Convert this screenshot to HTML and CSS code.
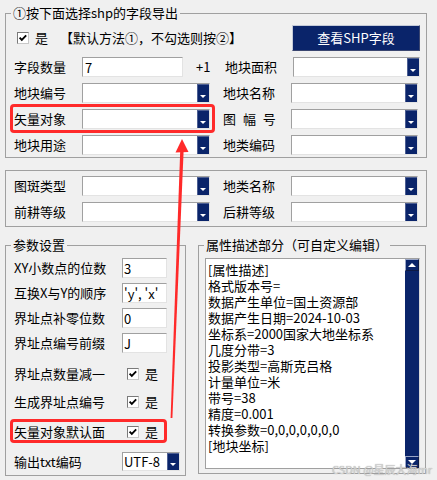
FILE: index.html
```html
<!DOCTYPE html>
<html lang="zh-CN">
<head>
    <meta charset="UTF-8">
    <meta name="viewport" content="width=device-width, initial-scale=1.0">
    <title>SHP字段导出</title>
    <link rel="stylesheet" href="styles.css">
</head>
<body>
    <fieldset class="group group-fields">
        <legend>①按下面选择shp的字段导出</legend>
        <div class="group-body">
            <div class="row row-top">
                <span class="check check-first"><svg viewBox="0 0 10 10"><polyline points="1.6,4.6 3.8,6.8 8.2,2.4"/></svg></span>
                <span class="check-text">是</span>
                <span class="note">【默认方法①，不勾选则按②】</span>
                <button class="btn-view">查看SHP字段</button>
            </div>
            <div class="row">
                <div class="cell">
                    <span class="lbl">字段数量</span>
                    <input class="edit edit-count" type="text" value="7">
                    <span class="plus">+1</span>
                </div>
                <div class="cell cell-right cell-shift">
                    <span class="lbl">地块面积</span>
                    <div class="combo combo-wide"><span class="combo-text"></span><span class="dd"></span></div>
                </div>
            </div>
            <div class="row">
                <div class="cell">
                    <span class="lbl">地块编号</span>
                    <div class="combo"><span class="combo-text"></span><span class="dd"></span></div>
                </div>
                <div class="cell cell-right">
                    <span class="lbl">地块名称</span>
                    <div class="combo"><span class="combo-text"></span><span class="dd"></span></div>
                </div>
            </div>
            <div class="row">
                <div class="cell mark mark-wide">
                    <span class="lbl">矢量对象</span>
                    <div class="combo"><span class="combo-text"></span><span class="dd"></span></div>
                </div>
                <div class="cell cell-right">
                    <span class="lbl lbl-spaced">图 幅 号</span>
                    <div class="combo"><span class="combo-text"></span><span class="dd"></span></div>
                </div>
            </div>
            <div class="row">
                <div class="cell">
                    <span class="lbl">地块用途</span>
                    <div class="combo"><span class="combo-text"></span><span class="dd"></span></div>
                </div>
                <div class="cell cell-right">
                    <span class="lbl">地类编码</span>
                    <div class="combo"><span class="combo-text"></span><span class="dd"></span></div>
                </div>
            </div>
        </div>
    </fieldset>

    <fieldset class="group group-extra">
        <div class="group-body">
            <div class="row">
                <div class="cell">
                    <span class="lbl">图斑类型</span>
                    <div class="combo"><span class="combo-text"></span><span class="dd"></span></div>
                </div>
                <div class="cell cell-right">
                    <span class="lbl">地类名称</span>
                    <div class="combo"><span class="combo-text"></span><span class="dd"></span></div>
                </div>
            </div>
            <div class="row">
                <div class="cell">
                    <span class="lbl">前耕等级</span>
                    <div class="combo"><span class="combo-text"></span><span class="dd"></span></div>
                </div>
                <div class="cell cell-right">
                    <span class="lbl">后耕等级</span>
                    <div class="combo"><span class="combo-text"></span><span class="dd"></span></div>
                </div>
            </div>
        </div>
    </fieldset>

    <div class="bottom">
        <fieldset class="group group-params">
            <legend>参数设置</legend>
            <div class="group-body">
                <div class="param-row">
                    <span class="param-lbl">XY小数点的位数</span>
                    <input class="edit edit-short" type="text" value="3">
                </div>
                <div class="param-row">
                    <span class="param-lbl">互换X与Y的顺序</span>
                    <input class="edit edit-short" type="text" value="'y', 'x'">
                </div>
                <div class="param-row">
                    <span class="param-lbl">界址点补零位数</span>
                    <input class="edit edit-short" type="text" value="0">
                </div>
                <div class="param-row">
                    <span class="param-lbl">界址点编号前缀</span>
                    <input class="edit edit-short" type="text" value="J">
                </div>
                <div class="param-row check-row-1">
                    <span class="param-lbl">界址点数量减一</span>
                    <span class="check param-check"><svg viewBox="0 0 10 10"><polyline points="1.6,4.6 3.8,6.8 8.2,2.4"/></svg></span>
                    <span class="check-text">是</span>
                </div>
                <div class="param-row check-row-2">
                    <span class="param-lbl">生成界址点编号</span>
                    <span class="check param-check"><svg viewBox="0 0 10 10"><polyline points="1.6,4.6 3.8,6.8 8.2,2.4"/></svg></span>
                    <span class="check-text">是</span>
                </div>
                <div class="param-row check-row-3">
                    <div class="mark mark-param">
                        <span class="param-lbl">矢量对象默认面</span>
                        <span class="check param-check"><svg viewBox="0 0 10 10"><polyline points="1.6,4.6 3.8,6.8 8.2,2.4"/></svg></span>
                        <span class="check-text">是</span>
                    </div>
                </div>
                <div class="param-row encode-row">
                    <span class="param-lbl">输出txt编码</span>
                    <div class="combo combo-small"><span class="combo-text">UTF-8</span><span class="dd"></span></div>
                </div>
            </div>
        </fieldset>

        <fieldset class="group group-desc">
            <legend>属性描述部分（可自定义编辑）</legend>
            <div class="group-body">
                <div class="memo">
                    <div class="memo-text">[属性描述]
格式版本号=
数据产生单位=国土资源部
数据产生日期=2024-10-03
坐标系=2000国家大地坐标系
几度分带=3
投影类型=高斯克吕格
计量单位=米
带号=38
精度=0.001
转换参数=0,0,0,0,0,0,0
[地块坐标]</div>
                    <div class="scrollbar">
                        <span class="sb-btn sb-up"></span>
                        <span class="sb-btn sb-down"></span>
                    </div>
                </div>
            </div>
        </fieldset>
    </div>

    <svg class="arrow" viewBox="0 0 437 480" width="437" height="480">
        <polygon points="182,139 175.5,152.5 188.5,152"/>
        <polygon points="180.2,151 183.6,151 172.4,418 170.6,418"/>
    </svg>

    <div class="watermark">CSDN @星辰大海mr</div>
</body>
</html>
```

FILE: styles.css
```css
* {
    box-sizing: border-box;
}

body {
    margin: 0;
    width: 437px;
    height: 480px;
    position: relative;
    overflow: hidden;
    background: #f0f0f0;
    font-family: "Noto Sans CJK SC", sans-serif;
    font-size: 13px;
    line-height: 16px;
    color: #000;
}

/* group boxes */
.group {
    margin: 0;
    padding: 0;
    min-width: 0;
    border: 1px solid #a0a0a0;
}

.group legend {
    margin-left: 5px;
    padding: 0 2px;
    line-height: 16px;
}

.group-fields {
    width: 422px;
    margin: 5px 0 0 5px;
}

.group-fields .group-body {
    display: flex;
    flex-direction: column;
    gap: 6px;
    padding: 4px 6px 2px 8px;
}

.group-extra {
    width: 422px;
    margin: 12px 0 0 5px;
}

.group-extra .group-body {
    display: flex;
    flex-direction: column;
    gap: 6px;
    padding: 5px 6px 4px 8px;
}

.bottom {
    display: flex;
    align-items: flex-start;
    margin: 10px 0 0 5px;
}

.group-params {
    width: 181px;
}

.group-params .group-body {
    padding: 5px 0 4px 8px;
}

.group-desc {
    width: 228px;
    margin-left: 12px;
}

.group-desc .group-body {
    padding: 5px 5px 4px 6px;
}

/* rows */
.row {
    display: flex;
    align-items: center;
    height: 20px;
}

.row-top {
    height: 26px;
}

.cell {
    display: flex;
    align-items: center;
    width: 196px;
}

.cell-right {
    width: 195px;
    margin-left: 13px;
}

.cell-shift {
    margin-left: 15px;
}

.lbl {
    width: 68px;
    flex: none;
}

.lbl-spaced {
    word-spacing: 4px;
}

/* checkbox */
.check {
    width: 12px;
    height: 12px;
    flex: none;
    display: flex;
    align-items: center;
    justify-content: center;
    background: #fff;
    border: 1px solid;
    border-color: #7a7a7a #c8c8c8 #c8c8c8 #7a7a7a;
}

.check svg {
    width: 10px;
    height: 10px;
    fill: none;
    stroke: #000;
    stroke-width: 1.9;
}

.check-first {
    margin-left: 3px;
}

.check-text {
    margin-left: 6px;
}

.note {
    margin-left: 12px;
}

.btn-view {
    margin-left: auto;
    width: 128px;
    height: 26px;
    padding: 0;
    font: inherit;
    color: #fff;
    background: #0a246a;
    border: 1px solid;
    border-color: #c4cad8 #3a4670 #3a4670 #c4cad8;
}

/* edits and combos */
.edit {
    height: 20px;
    margin: 0;
    padding: 0 2px;
    font: inherit;
    color: #000;
    background: #fff;
    border: 1px solid;
    border-color: #a0a0a0 #e3e3e3 #e3e3e3 #a0a0a0;
    outline: none;
}

.edit-count {
    width: 101px;
}

.plus {
    margin-left: 13px;
}

.combo {
    display: flex;
    width: 127px;
    height: 20px;
    background: #fff;
    border: 1px solid;
    border-color: #a0a0a0 #e3e3e3 #e3e3e3 #a0a0a0;
}

.cell .combo:not(.combo-wide) {
    width: 128px;
}

.cell-right .combo:not(.combo-wide) {
    width: 127px;
}

.combo-wide {
    width: 128px;
}

.combo-text {
    flex: 1;
    padding-left: 2px;
    line-height: 17px;
}

.dd {
    width: 12px;
    flex: none;
    display: flex;
    align-items: flex-end;
    justify-content: center;
    padding-bottom: 4px;
    background: #0a246a;
    box-shadow: inset 1px 1px #4d5f93;
}

.dd::after {
    content: "";
    border-left: 3px solid transparent;
    border-right: 3px solid transparent;
    border-top: 3px solid #fff;
}

/* red highlight */
.mark {
    border: 3px solid #ff2a2a;
    border-radius: 4px;
}

.mark-wide {
    margin: -5px -5px -4px -4px;
    padding: 2px 2px 1px 1px;
    width: 196px;
    box-sizing: content-box;
}

.mark-param {
    display: flex;
    align-items: center;
    margin: -5px 0 -3px -4px;
    padding: 2px 6px 0 1px;
}

/* parameter rows */
.param-row {
    display: flex;
    align-items: center;
    height: 20px;
    margin-top: 5px;
}

.param-row:first-child {
    margin-top: 0;
}

.param-lbl {
    width: 108px;
    flex: none;
}

.edit-short {
    width: 45px;
    padding: 0 1px;
}

.param-check {
    margin-left: 5px;
}

.check-row-1 {
    margin-top: 11px;
}

.check-row-2 {
    margin-top: 8px;
}

.check-row-3 {
    margin-top: 10px;
}

.encode-row {
    height: 19px;
    margin-top: 10px;
}

.combo-small {
    width: 58px;
    height: 19px;
}

.combo-small .combo-text {
    padding-left: 1px;
    line-height: 17px;
}

/* memo */
.memo {
    display: flex;
    height: 211px;
    background: #fff;
    border: 1px solid;
    border-color: #a0a0a0 #d8d8d8 #a0a0a0 #a0a0a0;
}

.memo-text {
    flex: 1;
    padding: 3px 0 0 2px;
    white-space: pre-line;
}

.scrollbar {
    width: 14px;
    display: flex;
    flex-direction: column;
    justify-content: space-between;
    background: #0a246a;
}

.sb-btn {
    height: 12px;
    display: flex;
    align-items: center;
    justify-content: center;
    border: 1px solid;
    border-color: #9aa6c6 #0d1a44 #0d1a44 #9aa6c6;
}

.sb-up::after {
    content: "";
    border-left: 4px solid transparent;
    border-right: 4px solid transparent;
    border-bottom: 4px solid #fff;
}

.sb-down::after {
    content: "";
    border-left: 4px solid transparent;
    border-right: 4px solid transparent;
    border-top: 4px solid #fff;
}

/* overlays */
.arrow {
    position: absolute;
    top: 0;
    left: 0;
    fill: #ff2a2a;
    pointer-events: none;
}

.watermark {
    position: absolute;
    right: 5px;
    bottom: 5px;
    font-size: 11px;
    line-height: 12px;
    color: #d4d4d4;
    text-shadow: 0 0 1px #9a9a9a;
}
```
